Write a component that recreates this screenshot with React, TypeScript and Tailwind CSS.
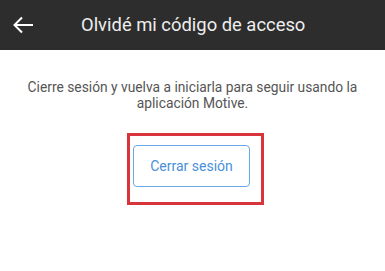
export default function App() {
  return (
    <div className="w-[385px] h-[271px] bg-white font-['Roboto',sans-serif]">
      <header className="h-[50px] bg-[#2d2d2d] flex items-center">
        <button type="button" className="ml-[12px] w-[22px] h-[22px] flex items-center justify-center">
          <svg width="22" height="22" viewBox="0 0 22 22" fill="none" stroke="#ffffff" strokeWidth="2">
            <path d="M21 11H2.5M10 3.5L2.5 11L10 18.5" />
          </svg>
        </button>
        <h1 className="ml-[47px] text-[18.4px] text-[#ededed]">Olvidé mi código de acceso</h1>
      </header>
      <div className="pt-[30px] px-4 text-center text-[13.8px] leading-[15.5px] text-[#555555]">
        Cierre sesión y vuelva a iniciarla para seguir usando la aplicación Motive.
      </div>
      <div className="mt-[22px] flex justify-center pl-[6px]">
        <div className="border-[3px] border-[#d8343b] pl-[3px] pr-[11px] pt-[9px] pb-[15px]">
          <button
            type="button"
            className="w-[117px] h-[42px] rounded-[4px] border border-[#6aa9e8] text-[14px] text-[#4a8fdb]"
          >
            Cerrar sesión
          </button>
        </div>
      </div>
    </div>
  );
}
